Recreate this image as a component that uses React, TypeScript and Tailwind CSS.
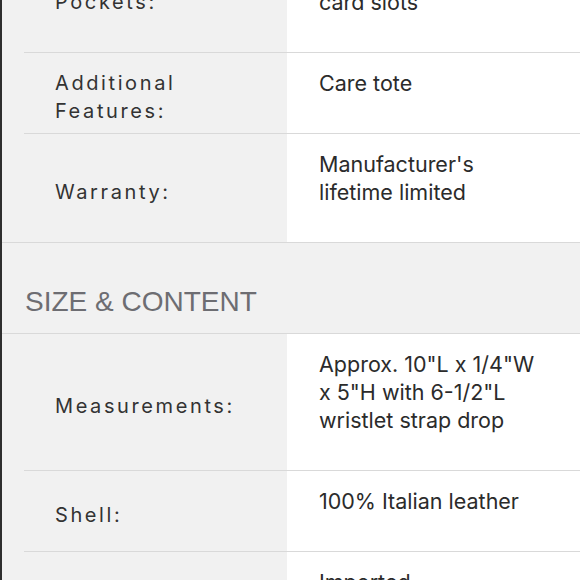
const specsTop = [
  { label: ['Interior', 'Pockets:'], value: ['Zip pocket, slip', 'pocket, 6', 'card slots'] },
  { label: ['Additional', 'Features:'], value: ['Care tote'] },
  { label: ['Warranty:'], value: ["Manufacturer's", 'lifetime limited'] },
]

const specsSize = [
  { label: ['Measurements:'], value: ['Approx. 10"L x 1/4"W', 'x 5"H with 6-1/2"L', 'wristlet strap drop'] },
  { label: ['Shell:'], value: ['100% Italian leather'] },
  { label: ['Origin:'], value: ['Imported'] },
]

type Spec = { label: string[]; value: string[] }

const SpecRow = ({ spec, last }: { spec: Spec; last?: boolean }) => (
  <div className="flex">
    <div className="w-[22px] shrink-0 bg-[#f1f1f1]" />
    <div className={`flex flex-1 ${last ? '' : 'border-b border-[#d9d9d9]'}`}>
      <div className="flex w-[263px] shrink-0 items-center bg-[#f1f1f1] pl-[31px] pt-2 text-[20px] leading-[28px] tracking-[2.6px] text-[#333]">
        <div>
          {spec.label.map((l) => (
            <div key={l}>{l}</div>
          ))}
        </div>
      </div>
      <div className="flex-1 bg-white pl-8 pt-4 pb-9 text-[21.5px] leading-[28px] text-[#2b2b2b]">
        {spec.value.map((v) => (
          <div key={v}>{v}</div>
        ))}
      </div>
    </div>
  </div>
)

export default function App() {
  return (
    <div className="h-[580px] w-[580px] overflow-hidden bg-white font-['Inter',sans-serif]">
      <div className="-mt-[84px] border-l-2 border-[#2e2e2e]">
        {specsTop.map((s, i) => (
          <SpecRow key={i} spec={s} last={i === specsTop.length - 1} />
        ))}
        <div className="border-y border-[#d9d9d9] bg-[#f1f1f1] pl-[23px] pt-[42px] pb-[14px]">
          <h2 className="font-['Liberation_Sans',Arial,sans-serif] text-[28px] leading-[34px] text-[#6d6d72]">
            SIZE &amp; CONTENT
          </h2>
        </div>
        {specsSize.map((s, i) => (
          <SpecRow key={i} spec={s} />
        ))}
      </div>
    </div>
  )
}
